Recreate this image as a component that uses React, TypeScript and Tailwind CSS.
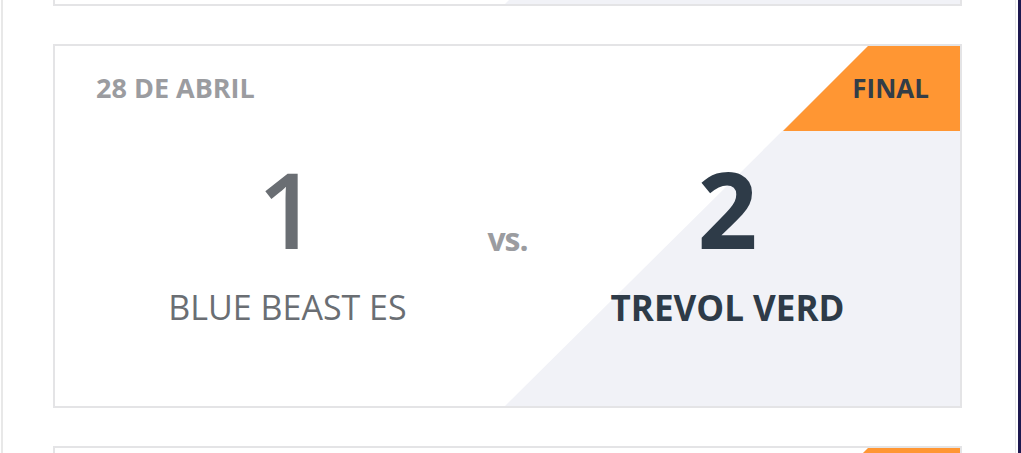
import React from "react";

type Match = { date: string; s1: number; s2: number; t1: string; t2: string };

const match: Match = { date: "28 DE ABRIL", s1: 1, s2: 2, t1: "BLUE BEAST ES", t2: "TREVOL VERD" };

function Card({ m }: { m?: Match }) {
  return (
    <div className="relative h-[364px] w-[909px] shrink-0 overflow-hidden border-2 border-[#e4e4e6] bg-white font-['Open_Sans',sans-serif]">
      <div className="absolute inset-0 bg-[#f1f2f7] [clip-path:polygon(813px_0,100%_0,100%_100%,450px_100%)]" />
      <div className="absolute right-0 top-0 h-[85px] w-[177px] bg-[#ff9633] [clip-path:polygon(85px_0,100%_0,100%_100%,0_100%)]" />
      {m && (
        <>
          <div className="relative flex h-[85px] items-center justify-between pb-[2px] pl-[41px] pr-[31px]">
            <span className="text-[27px] font-bold leading-none text-[#9b9ca0]">{m.date}</span>
            <span className="text-[26px] font-bold leading-none text-[#333d47]">FINAL</span>
          </div>
          <div className="relative mt-[25px] flex justify-center">
            <div className="flex w-[360px] flex-col items-center">
              <span className="text-[105px] font-semibold leading-none text-[#6a6e73]">{m.s1}</span>
              <span className="mt-[29px] text-[34px] font-normal leading-none text-[#6a6e73]">{m.t1}</span>
            </div>
            <div className="flex w-[80px] justify-center pt-[67px]">
              <span className="text-[32px] font-bold leading-none tracking-[-1px] text-[#9b9ca0]">vs.</span>
            </div>
            <div className="flex w-[360px] flex-col items-center">
              <span className="text-[105px] font-bold leading-none text-[#2e3b48]">{m.s2}</span>
              <span className="mt-[29px] text-[35px] font-bold leading-none text-[#2e3b48]">{m.t2}</span>
            </div>
          </div>
        </>
      )}
    </div>
  );
}

export default function App() {
  return (
    <div className="flex h-[453px] w-[1021px] overflow-hidden bg-white">
      <div className="w-[1px] shrink-0 bg-white" />
      <div className="w-[2px] shrink-0 bg-[#e8e8e8]" />
      <div className="mt-[-358px] flex w-[1012px] shrink-0 flex-col gap-[38px] pl-[50px]">
        <Card />
        <Card m={match} />
        <Card />
      </div>
      <div className="w-[1px] shrink-0 bg-[#e6e6e8]" />
      <div className="w-[2px] shrink-0 bg-white" />
      <div className="flex-1 bg-[#1d1850]" />
    </div>
  );
}
